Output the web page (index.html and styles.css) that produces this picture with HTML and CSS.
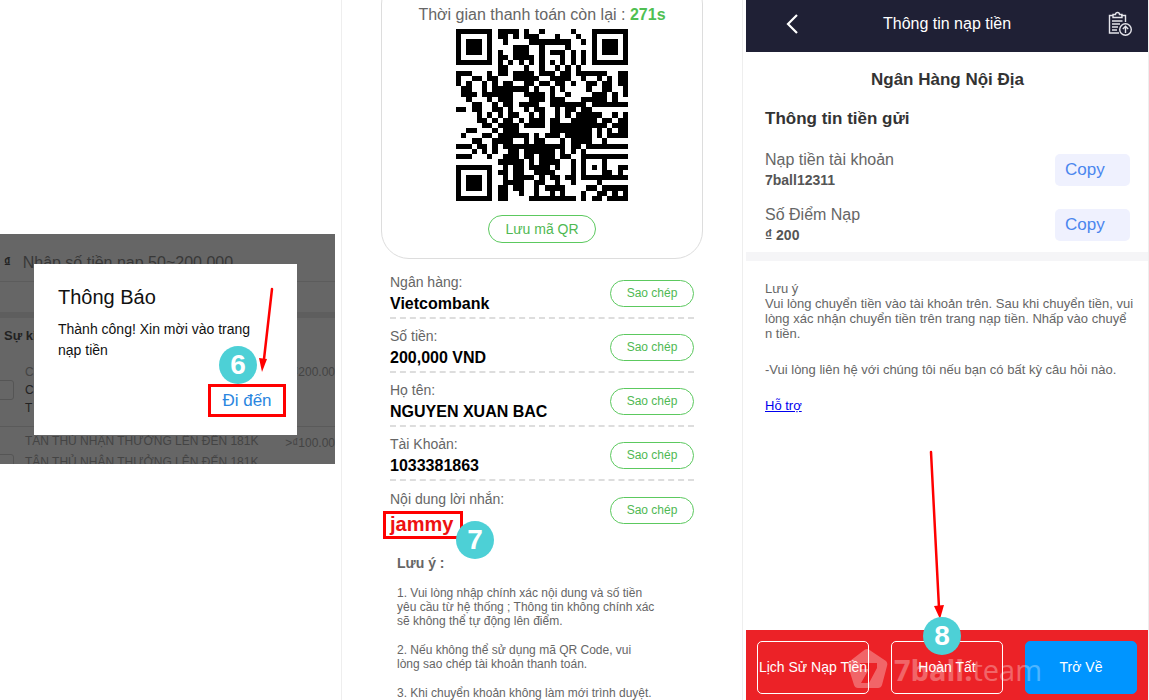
FILE: index.html
```html
<!DOCTYPE html>
<html lang="vi">
<head>
    <meta charset="UTF-8">
    <meta name="viewport" content="width=device-width, initial-scale=1.0">
    <title>Thông tin nạp tiền</title>
    <link rel="stylesheet" href="styles.css">
</head>
<body>
    <main class="steps">
        <!-- Step 6: confirm dialog -->
        <section class="step step-confirm">
            <div class="dimmed">
                <div class="amount-row"><b>₫</b><span>Nhập số tiền nạp 50~200,000</span></div>
                <div class="spacer-row"></div>
                <div class="event-title">Sự kiện</div>
                <div class="event">
                    <input type="checkbox" aria-label="Sự kiện 1">
                    <div class="event-text"><span class="faded">C</span><span>C</span><span>T</span></div>
                    <span class="event-value">₫200.00</span>
                </div>
                <div class="event event-last">
                    <input type="checkbox" aria-label="Sự kiện 2">
                    <div class="event-text"><span class="faded">TÂN THỦ NHẬN THƯỞNG LÊN ĐẾN 181K</span><span class="faded">TÂN THỦ NHẬN THƯỞNG LÊN ĐẾN 181K</span></div>
                    <span class="event-value">&gt;₫100.00</span>
                </div>
                <div class="dialog" role="dialog" aria-labelledby="dialog-title">
                    <h2 id="dialog-title">Thông Báo</h2>
                    <p>Thành công! Xin mời vào trang nạp tiền</p>
                    <button type="button" class="go-button">Đi đến</button>
                    <span class="badge badge-6">6</span>
                    <svg class="arrow arrow-6" width="20" height="86" viewBox="0 0 20 86">
                        <path d="M14 2 6 72" fill="none" stroke="#f00" stroke-width="2.5" stroke-linecap="round"/>
                        <path d="M1 71 9 72 4 85z" fill="#f00"/>
                    </svg>
                </div>
            </div>
        </section>

        <!-- Step 7: QR and transfer details -->
        <section class="step step-transfer">
            <div class="qr-card">
                <p class="timer">Thời gian thanh toán còn lại : <b>271s</b></p>
                <svg class="qr" id="qr" viewBox="0 0 33 33" shape-rendering="crispEdges" role="img" aria-label="QR"></svg>
                <button type="button" class="outline-button save-button">Lưu mã QR</button>
            </div>
            <div class="details">
                <div class="detail">
                    <div><span>Ngân hàng:</span><b>Vietcombank</b></div>
                    <button type="button" class="outline-button">Sao chép</button>
                </div>
                <div class="detail">
                    <div><span>Số tiền:</span><b>200,000 VND</b></div>
                    <button type="button" class="outline-button">Sao chép</button>
                </div>
                <div class="detail">
                    <div><span>Họ tên:</span><b>NGUYEN XUAN BAC</b></div>
                    <button type="button" class="outline-button">Sao chép</button>
                </div>
                <div class="detail">
                    <div><span>Tài Khoản:</span><b>1033381863</b></div>
                    <button type="button" class="outline-button">Sao chép</button>
                </div>
                <div class="detail">
                    <div><span>Nội dung lời nhắn:</span><b class="message">jammy<i class="badge badge-7">7</i></b></div>
                    <button type="button" class="outline-button">Sao chép</button>
                </div>
            </div>
            <div class="notes">
                <h3>Lưu ý :</h3>
                <p>1. Vui lòng nhập chính xác nội dung và số tiền yêu cầu từ hệ thống ; Thông tin không chính xác sẽ không thể tự động lên điểm.</p>
                <p>2. Nếu không thể sử dụng mã QR Code, vui lòng sao chép tài khoản thanh toán.</p>
                <p>3. Khi chuyển khoản không làm mới trình duyệt.</p>
            </div>
        </section>

        <!-- Step 8: finish deposit -->
        <section class="step step-finish">
            <header class="top-bar">
                <button type="button" class="icon-button" aria-label="Quay lại">
                    <svg width="14" height="22" viewBox="0 0 14 22"><path d="M12 2 3 11l9 9" fill="none" stroke="#fff" stroke-width="2.2"/></svg>
                </button>
                <h1>Thông tin nạp tiền</h1>
                <button type="button" class="icon-button" aria-label="Lịch sử">
                    <svg width="26" height="26" viewBox="0 0 26 26" fill="none" stroke="#e4e4ea" stroke-width="1.4">
                        <path d="M12 22H2.500V4.500H6M14 4.500h4.500V11"/>
                        <path d="M6 6.500V3.500h2.500a2 2 0 0 1 4 0H15v3z"/>
                        <path d="M5 10h10.500M5 13h8M5 16h6M5 19h5"/>
                        <circle cx="18.500" cy="18.500" r="5.800"/>
                        <path d="M18.500 22v-6.500M15.800 18l2.700-2.700 2.700 2.700"/>
                    </svg>
                </button>
            </header>
            <div class="deposit">
                <h2 class="bank-title">Ngân Hàng Nội Địa</h2>
                <h2>Thông tin tiền gửi</h2>
                <div class="copy-row">
                    <div><span>Nạp tiền tài khoản</span><b>7ball12311</b></div>
                    <button type="button" class="copy-button">Copy</button>
                </div>
                <div class="copy-row">
                    <div><span>Số Điểm Nạp</span><b>₫ 200</b></div>
                    <button type="button" class="copy-button">Copy</button>
                </div>
            </div>
            <div class="deposit-notes">
                <p>Lưu ý<br>Vui lòng chuyển tiền vào tài khoản trên. Sau khi chuyển tiền, vui lòng xác nhận chuyển tiền trên trang nạp tiền. Nhấp vào chuyể<br>n tiền.</p>
                <p>-Vui lòng liên hệ với chúng tôi nếu bạn có bất kỳ câu hỏi nào.</p>
                <a href="#">Hỗ trợ</a>
            </div>
            <footer class="actions">
                <button type="button">Lịch Sử Nạp Tiền</button>
                <button type="button">Hoàn Tất</button>
                <button type="button" class="back">Trở Về</button>
                <div class="watermark">
                    <svg width="40" height="42" viewBox="0 0 40 42">
                        <path fill="#fff" fill-rule="evenodd" d="M19 0q2 0 4 2l15 10q2 2 1 5l-5 19q-1 3-4 3H10q-3 0-4-3L0 17q-1-3 2-5L15 2q2-2 4-2zM12 14v6h9l-8 14h8l8-15v-5z"/>
                    </svg>
                    <span><b>7ball.</b>team</span>
                </div>
                <svg class="arrow arrow-8" width="20" height="170" viewBox="0 0 20 170">
                    <path d="M4 2 12 158" fill="none" stroke="#f00" stroke-width="2.500" stroke-linecap="round"/>
                    <path d="M7 156 17 155 13 169z" fill="#f00"/>
                </svg>
                <span class="badge badge-8">8</span>
            </footer>
        </section>
    </main>
    <script src="script.js"></script>
</body>
</html>
```
FILE: styles.css
```css
* {
    box-sizing: border-box;
}
body {
    margin: 0;
    background: #fff;
    color: #666;
    font-family: "Liberation Sans", Arial, sans-serif;
}
h1, h2, h3, p {
    margin: 0;
}
button {
    font-family: inherit;
    cursor: pointer;
}
.steps {
    display: grid;
    grid-template-columns: 342fr 401fr 406fr;
    grid-template-rows: minmax(0, 1fr);
    height: 100vh;
    overflow: hidden;
}
.step {
    border-right: 1px solid #eee;
    min-width: 0;
}

/* numbered badges and arrows */
.badge {
    position: absolute;
    width: 38px;
    height: 38px;
    border-radius: 50%;
    background: #4dd0d6;
    color: #fff;
    font: bold 28px/38px "Liberation Sans", Arial, sans-serif;
    text-align: center;
}
.badge-6 {
    right: 40px;
    bottom: 51px;
}
.badge-7 {
    left: 70px;
    top: 7px;
}
.badge-8 {
    left: 177px;
    top: -13px;
}
.arrow {
    position: absolute;
}
.arrow-6 {
    right: 19px;
    top: 23px;
}
.arrow-8 {
    left: 181px;
    top: -180px;
}

/* confirm dialog */
.step-confirm {
    display: flex;
    align-items: center;
    padding: 0 6px 2px 0;
}
.dimmed {
    position: relative;
    width: 100%;
    height: 230px;
    overflow: hidden;
    background: #666;
    color: #222;
    font-size: 13px;
}
.amount-row {
    display: flex;
    gap: 12px;
    height: 48px;
    padding: 20px 4px 0;
    border-bottom: 1px solid #5c5c5c;
}
.amount-row span {
    font-size: 16px;
    color: #383838;
}
.spacer-row {
    height: 36px;
    border-bottom: 6px solid #5e5e5e;
}
.event-title {
    padding: 10px 4px;
    font-weight: bold;
    white-space: nowrap;
}
.event {
    display: flex;
    align-items: center;
    height: 74px;
    border-bottom: 1px solid #5a5a5a;
    white-space: nowrap;
}
.event input {
    appearance: none;
    flex: none;
    width: 22px;
    height: 20px;
    margin: 0 3px 0 -8px;
    border: 1px solid #555;
    border-radius: 3px;
}
.event-text {
    display: flex;
    flex-direction: column;
    gap: 4px;
    width: 264px;
    margin-left: 8px;
    font-size: 12px;
}
.faded, .event-value {
    color: #444;
}
.event-value {
    align-self: flex-start;
    margin: 12px 0 0 6px;
    font-size: 12px;
}
.event-last {
    align-items: flex-start;
    padding-top: 7px;
}
.event-last input {
    margin-top: 20px;
}
.event-last .event-text {
    gap: 7px;
}
.event-last .event-value {
    margin: 2px 0 0;
}
.dialog {
    position: absolute;
    top: 30px;
    left: 34px;
    right: 38px;
    height: 171px;
    padding: 20px 24px;
    background: #fff;
    color: #111;
}
.dialog h2 {
    font-size: 20px;
    font-weight: normal;
    line-height: 26px;
}
.dialog p {
    margin-top: 9px;
    font-size: 14px;
    line-height: 21px;
}
.go-button {
    position: absolute;
    right: 11px;
    bottom: 18px;
    width: 78px;
    height: 33px;
    padding: 0;
    border: 3px solid #f00;
    background: #fff;
    color: #2a86e0;
    font-size: 17px;
}

/* transfer details */
.step-transfer {
    padding: 0 39px;
}
.qr-card {
    display: flex;
    flex-direction: column;
    align-items: center;
    margin-top: -24px;
    padding: 28px 0 15px;
    border: 1px solid #ddd;
    border-radius: 28px;
}
.timer {
    font-size: 16px;
    line-height: 20px;
}
.timer b {
    color: #4fbf53;
}
.qr {
    width: 172px;
    height: 172px;
    margin: 4px 0 14px;
}
.outline-button {
    flex: none;
    width: 84px;
    height: 27px;
    padding: 0;
    border: 1px solid #5cc95f;
    border-radius: 14px;
    background: #fff;
    color: #4fb953;
    font-size: 12px;
}
.save-button {
    width: 108px;
    height: 28px;
    font-size: 14px;
}
.details {
    padding: 6px 9px 0;
}
.detail {
    display: flex;
    align-items: center;
    justify-content: space-between;
    height: 54px;
    border-bottom: 2px dashed #ddd;
}
.detail:last-child {
    border-bottom: none;
}
.detail .outline-button {
    margin-top: 4px;
}
.detail div {
    padding-top: 3px;
}
.detail span, .detail b {
    display: block;
    font-size: 14px;
    line-height: 21px;
}
.detail b {
    color: #000;
    font-size: 16px;
}
.detail .message {
    position: relative;
    width: 80px;
    height: 28px;
    margin: 1px 0 -8px -7px;
    padding-left: 4px;
    border: 3px solid #f00;
    color: #e11;
    font-size: 20px;
}
.message .badge {
    font-style: normal;
}
.notes {
    padding: 20px 47px 0 16px;
    font-size: 12px;
    line-height: 14px;
}
.notes h3 {
    margin-bottom: 15px;
    font-size: 14px;
    line-height: 16px;
}
.notes p {
    margin-bottom: 15px;
}

/* finish deposit */
.step-finish {
    display: flex;
    flex-direction: column;
    padding-left: 3px;
}
.top-bar {
    display: grid;
    grid-template-columns: 1fr auto 1fr;
    align-items: center;
    height: 52px;
    padding: 0 15px 4px;
    background: #1f2035;
    color: #fff;
}
.top-bar h1 {
    font-size: 16px;
    font-weight: normal;
}
.icon-button {
    display: flex;
    padding: 0 0 0 24px;
    border: none;
    background: none;
}
.icon-button:last-child {
    justify-self: end;
}
.deposit {
    padding: 17px 18px 7px 19px;
    border-bottom: 9px solid #f5f5f7;
}
.deposit h2 {
    color: #333;
    font-size: 17px;
    line-height: 22px;
}
.deposit .bank-title {
    margin-bottom: 17px;
    text-align: center;
}
.copy-row {
    display: flex;
    align-items: center;
    justify-content: space-between;
    margin-top: 20px;
}
.copy-row + .copy-row {
    margin-top: 15px;
}
.copy-row span, .copy-row b {
    display: block;
    font-size: 16px;
    line-height: 20px;
}
.copy-row b {
    color: #555;
    font-size: 14px;
}
.copy-button {
    width: 75px;
    height: 32px;
    padding: 0 10px;
    border: none;
    border-radius: 5px;
    background: #eff1fe;
    color: #4a86ee;
    font-size: 17px;
    text-align: left;
}
.deposit-notes {
    flex: 1;
    padding: 20px 12px 0 19px;
    font-size: 13px;
    line-height: 15px;
}
.deposit-notes p {
    margin-bottom: 21px;
}
.deposit-notes a {
    color: #00e;
}
.actions {
    position: relative;
    display: flex;
    gap: 22px;
    height: 70px;
    padding: 11px 11px 6px;
    background: #ec2227;
}
.actions button {
    flex: 1 1 0;
    min-width: 0;
    padding: 0 0 2px;
    border: 1px solid #fff;
    border-radius: 5px;
    background: none;
    color: #fff;
    font-size: 14px;
    white-space: nowrap;
}
.actions .back {
    border-color: #0095ff;
    background: #0095ff;
}
.watermark {
    position: absolute;
    left: 102px;
    top: 19px;
    display: flex;
    align-items: center;
    gap: 6px;
    opacity: 0.3;
    color: #fff;
    font: 29px/42px "Open Sans", sans-serif;
    pointer-events: none;
}
```
FILE: script.js
```js
const rows = [
    "#######.####.#..#.....#...#######",
    "#.....#.##.#.###...#...#..#.....#",
    "#.###.#..#....########..#.#.###.#",
    "#.###.#....###..#....#....#.###.#",
    "#.###.#.#..###..#.###.#.#.#.###.#",
    "#.....#.##.####.#...#.#.#.#.....#",
    "#######.#.#.#.#.#.#.#.#.#.#######",
    "........##...#..#..#.#.#.........",
    "###...#.##.####.###.##.######..##",
    "#..##.##...#####..####..#..#.#.##",
    "#.#..#.#.##..##.##.##.#..##.##.##",
    ".##..#.#######.#..#.#....#..##..#",
    ".###.######..####.#..#....###.#.#",
    "..#...#.###...###.###...#####.#..",
    "...##..#.##.####..#######.#######",
    "##.##..##.#..#.##..#.##.##.......",
    "....#.#.#.##..#.#..#.#.#####..#.#",
    "....##.#.##.#.###.##..#####.##.##",
    ".....##.####.####.###########.###",
    "..##...#.###......########.#.#.##",
    ".#...##.######.#.###.#####.#.####",
    "...##..####..#.##...#.####..#....",
    "###.##.#.############.##.########",
    "...#.#.#..##.######.#.#.#........",
    "###...#..###.##.###.##..#########",
    "........#####.#.####..#.#...#....",
    "#######..#.##.####.#..#.#.#.#..##",
    "#.....#.##.##..####...#.#...##.#.",
    "#.###.#..#.####.#.##.##.#########",
    "#.###.#..####..##..#..#....#.....",
    "#.###.#.##.##..#.####....##.#####",
    "#.....#.##..#..#..#.#...#..##.#.#",
    "#######.##....#########.#.##.####"
];

const path = document.createElementNS("http://www.w3.org/2000/svg", "path");
let d = "";
rows.forEach((row, y) => {
    [...row].forEach((cell, x) => {
        if (cell === "#") d += `M${x} ${y}h1v1h-1z`;
    });
});
path.setAttribute("d", d);
document.getElementById("qr").appendChild(path);
```
